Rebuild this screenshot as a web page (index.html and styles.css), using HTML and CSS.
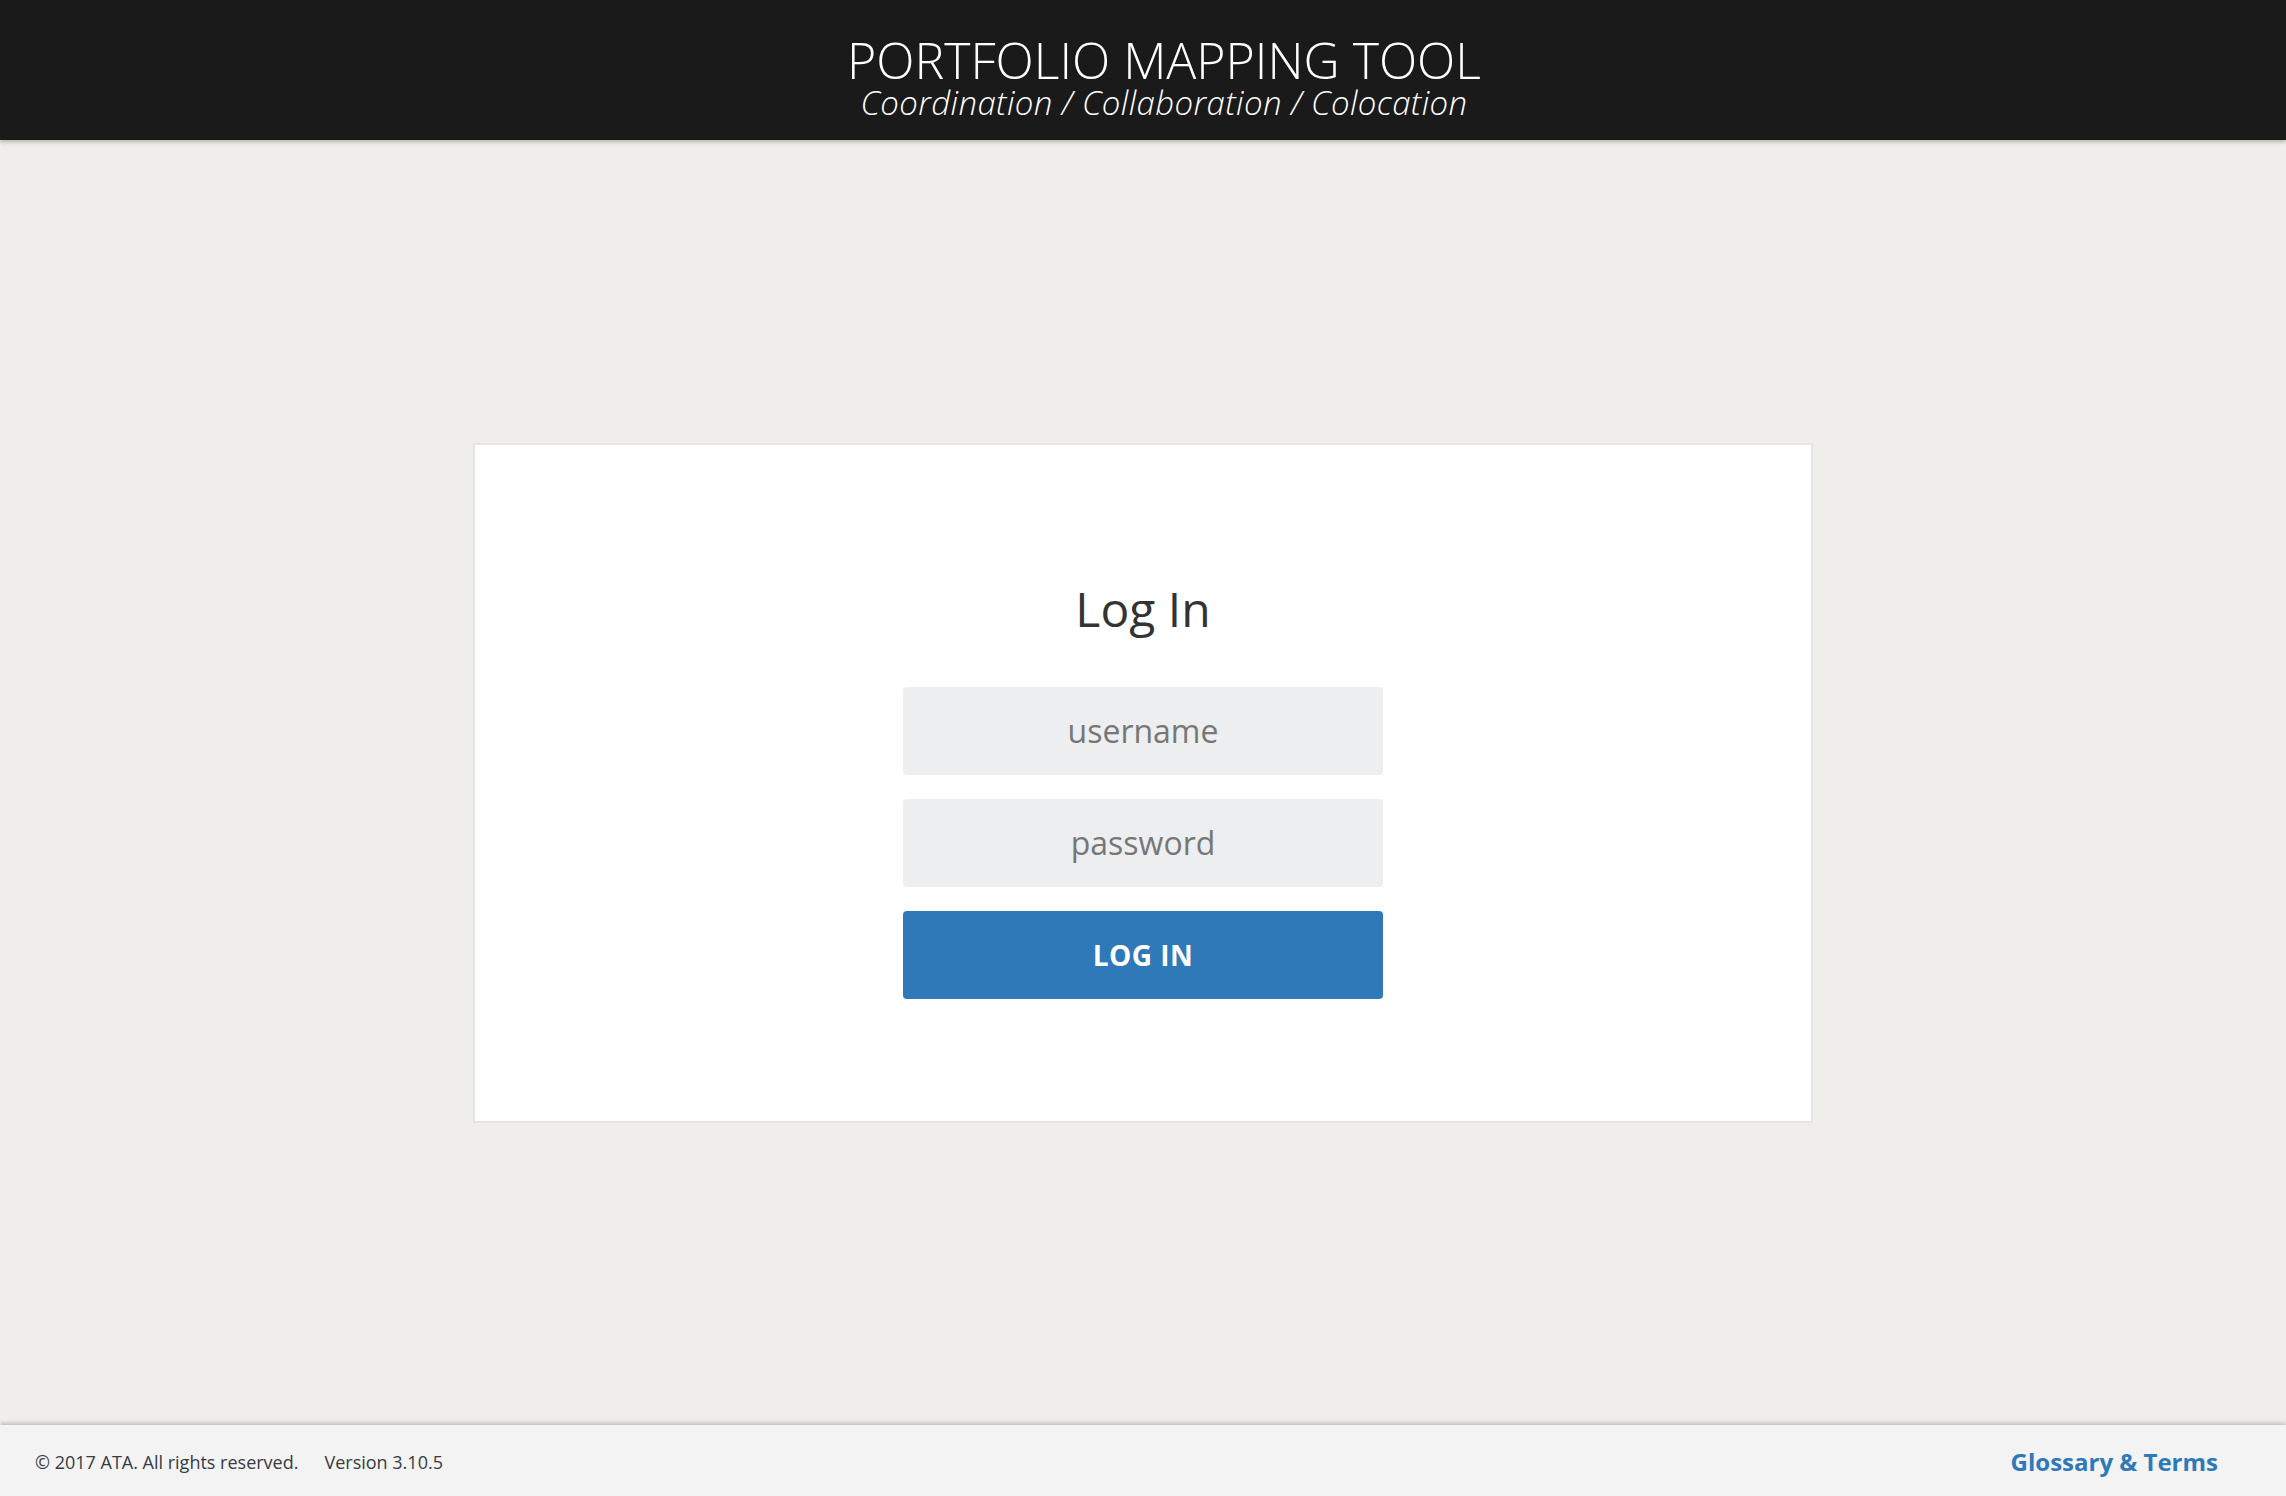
FILE: index.html
```html
<!DOCTYPE html>
<html lang="en">
<head>
<meta charset="utf-8">
<title>Portfolio Mapping Tool</title>
<link rel="stylesheet" href="styles.css">
</head>
<body>
<div class="page">
  <header class="topbar">
    <h1 class="title">PORTFOLIO MAPPING TOOL</h1>
    <p class="subtitle">Coordination / Collaboration / Colocation</p>
  </header>
  <main class="main">
    <section class="card">
      <form class="login">
        <h2 class="login-heading">Log In</h2>
        <input class="field" type="text" placeholder="username">
        <input class="field" type="password" placeholder="password">
        <button class="btn" type="button">LOG IN</button>
      </form>
    </section>
  </main>
  <footer class="footer">
    <div class="footer-left">
      <span class="copy">© 2017 ATA. All rights reserved.</span>
      <span class="version">Version 3.10.5</span>
    </div>
    <a class="footer-link" href="#">Glossary &amp; Terms</a>
  </footer>
</div>
</body>
</html>
```
FILE: styles.css
```css
* { box-sizing: border-box; }
html, body {
  margin: 0;
  padding: 0;
  height: 100%;
}
body {
  font-family: "Open Sans", "Liberation Sans", sans-serif;
  background: #efeeea;
  color: #333;
}
.page {
  display: flex;
  flex-direction: column;
  height: 100vh;
}
.topbar {
  height: 140px;
  flex: 0 0 140px;
  background: #1a1a1a;
  color: #fff;
  display: flex;
  flex-direction: column;
  align-items: center;
  padding-top: 34px;
  padding-left: 42px;
  box-shadow: 0 2px 4px rgba(0,0,0,0.25);
  position: relative;
  z-index: 2;
}
.title {
  margin: 0;
  font-size: 50px;
  font-weight: 300;
  line-height: 52px;
}
.subtitle {
  margin: 0;
  font-size: 33px;
  font-style: italic;
  font-weight: 300;
  letter-spacing: 0.4px;
  line-height: 34px;
}
.main {
  flex: 1;
  display: flex;
  align-items: center;
  justify-content: center;
}
.card {
  width: 1340px;
  height: 680px;
  background: #fff;
  border: 2px solid #e4e4e0;
  display: flex;
  justify-content: center;
  padding-top: 132px;
}
.login {
  width: 480px;
  display: flex;
  flex-direction: column;
  align-items: stretch;
}
.login-heading {
  margin: 0 0 46px;
  text-align: center;
  font-size: 48px;
  font-weight: 400;
  line-height: 64px;
  color: #333;
}
.field {
  height: 88px;
  border: none;
  border-radius: 4px;
  background: #edeef0;
  font-family: inherit;
  font-size: 32px;
  text-align: center;
  color: #333;
  margin-bottom: 24px;
  outline: none;
}
.field::placeholder {
  color: #777;
}
.btn {
  height: 88px;
  border: none;
  border-radius: 4px;
  background: #2f79b9;
  color: #fff;
  font-family: inherit;
  font-size: 28px;
  font-weight: 700;
  letter-spacing: 0.5px;
}
.footer {
  height: 71px;
  flex: 0 0 71px;
  background: #f3f3f3;
  box-shadow: 0 -2px 4px rgba(0,0,0,0.2);
  display: flex;
  align-items: center;
  justify-content: space-between;
  padding: 2px 68px 0 35px;
  position: relative;
  z-index: 2;
}
.footer-left {
  display: flex;
  gap: 26px;
  font-size: 18px;
  color: #363c44;
}
.footer-link {
  font-size: 24px;
  font-weight: 700;
  color: #2f79b9;
  text-decoration: none;
}
```
